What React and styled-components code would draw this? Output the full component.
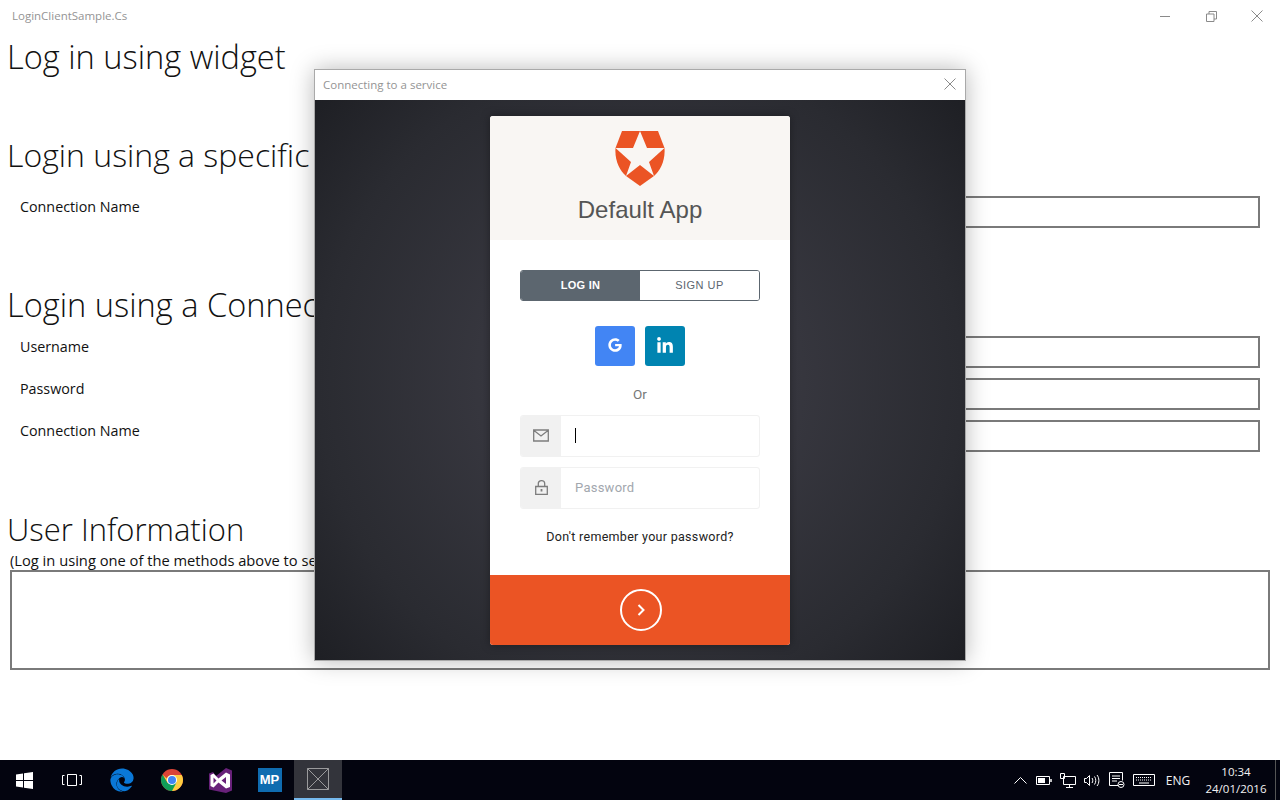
import React from "react";
import styled, { createGlobalStyle } from "styled-components";
import { FaGoogle, FaLinkedinIn, FaEdge } from "react-icons/fa";

const Global = createGlobalStyle`
  html, body { margin: 0; padding: 0; background: #fff; }
  * { box-sizing: border-box; }
  #root { width: 1280px; height: 800px; overflow: hidden; }
`;
const Win = styled.div`
  position: relative; width: 1280px; height: 800px; display: flex; flex-direction: column;
  font-family: "Open Sans", "Noto Sans", sans-serif; color: #111; background: #fff;
`;
const TitleBar = styled.header`
  height: 32px; flex: none; display: flex; align-items: center; padding-left: 12px;
  font-size: 11.5px; color: #949494;
`;
const TitleText = styled.span`margin-top: -2px;`;
const WinControls = styled.div`
  margin-left: auto; display: flex; align-items: center; height: 32px;
`;
const WinBtn = styled.div`
  width: 46px; height: 32px; display: flex; align-items: center; justify-content: center;
`;
const Main = styled.main`flex: 1; min-height: 0;`;
const Heading = styled.h2`
  margin: ${p => p.$top}px 0 0 7px; font-size: ${p => p.$size}px; font-weight: 300; line-height: 44px; color: #111; white-space: nowrap;
`;
const Rows = styled.div`
  margin-top: ${p => p.$top}px; padding: 0 20px; display: flex; flex-direction: column; gap: 10px;
`;
const Row = styled.div`display: grid; grid-template-columns: 300px 1fr; align-items: start;`;
const Label = styled.label`font-size: 14.3px; line-height: 22px;`;
const Field = styled.div`height: 32px; border: 2px solid #7a7a7a; background: #fff;`;
const Note = styled.p`margin: 0 0 0 10px; font-size: 14.7px; line-height: 19px; white-space: nowrap;`;
const OutBox = styled.div`margin: 0 10px; height: 100px; border: 2px solid #7a7a7a;`;

const Taskbar = styled.footer`
  height: 40px; flex: none; background: #03040f; display: flex; align-items: stretch;
`;
const TaskItem = styled.div`
  width: ${p => p.$w}px; display: flex; align-items: center; justify-content: center;
  background: ${p => (p.$active ? "#33343b" : "transparent")};
  border-bottom: ${p => (p.$active ? "2px solid #76b9ed" : "none")};
`;
const Tray = styled.div`margin-left: auto; display: flex; align-items: center; color: #fff; padding-right: 4px;`;
const TraySlot = styled.div`
  width: ${p => p.$w}px; height: 40px; display: flex; align-items: center; justify-content: center;
  font-size: 12px; color: #f2f2f2;
`;
const Clock = styled.div`
  width: 72px; margin-left: 2px; font-size: 11.5px; line-height: 17px; text-align: center; color: #f2f2f2;
`;
const ShowDesktop = styled.div`width: 1px; height: 40px; background: #555; margin-left: 3px;`;
const MpTile = styled.div`
  width: 24px; height: 24px; background: #0f6cb0; color: #fff; font: bold 13px/24px "Liberation Sans", sans-serif;
  text-align: center;
`;

const Modal = styled.section`
  position: absolute; left: 314px; top: 69px; width: 652px; height: 592px;
  border: 1px solid #a9a9a9; background: #fff; box-shadow: 0 0 22px rgba(0,0,0,.28);
  display: flex; flex-direction: column;
`;
const ModalBar = styled.div`
  height: 30px; flex: none; display: flex; align-items: center; justify-content: space-between;
  padding: 0 9px 2px 8px; font-size: 11.5px; color: #949494;
`;
const Stage = styled.div`
  flex: 1; display: flex; justify-content: center; align-items: flex-start; padding-top: 16px;
  background: radial-gradient(circle at 50% 50%, #40404b 0%, #37373f 35%, #2a2b31 75%, #1e1f24 100%);
`;
const Card = styled.div`
  width: 300px; height: 529px; background: #fff; border-radius: 3px; overflow: hidden;
  display: flex; flex-direction: column; box-shadow: 0 0 10px rgba(0,0,0,.35);
  font-family: Roboto, "Liberation Sans", sans-serif;
`;
const CardHead = styled.div`
  height: 124px; flex: none; background: #f9f6f3; display: flex; flex-direction: column; align-items: center; padding-top: 15px;
`;
const AppName = styled.h1`
  margin: 7px 0 0; font: 400 24px/34px "Liberation Sans", Arial, sans-serif; letter-spacing: .05px; color: #555;
`;
const CardBody = styled.div`flex: 1; padding: 30px 30px 0; display: flex; flex-direction: column;`;
const Tabs = styled.div`
  height: 31px; display: flex; border: 1px solid #5c666f; border-radius: 3px; overflow: hidden; flex: none;
`;
const Tab = styled.div`
  flex: 1; display: flex; align-items: center; justify-content: center; padding-bottom: 2px;
  font: ${p => (p.$on ? 700 : 400)} 11px "Liberation Sans", Arial, sans-serif; letter-spacing: ${p => (p.$on ? ".3px" : ".5px")};
  background: ${p => (p.$on ? "#5c666f" : "#fff")}; color: ${p => (p.$on ? "#fff" : "#5c666f")};
`;
const Socials = styled.div`margin-top: 25px; display: flex; justify-content: center; gap: 10px;`;
const Social = styled.div`
  width: 40px; height: 40px; border-radius: 3px; background: ${p => p.$bg}; color: #fff;
  display: flex; align-items: center; justify-content: center; padding-bottom: ${p => p.$lift || 0}px;
`;
const Or = styled.div`margin-top: 19px; height: 18px; font-size: 13.5px; line-height: 18px; color: #777; text-align: center;`;
const InputRow = styled.div`
  margin-top: ${p => p.$top}px; height: 42px; display: flex; border: 1px solid #f1f1f1; border-radius: 3px; overflow: hidden; flex: none;
`;
const InputIcon = styled.div`
  width: 40px; background: #f1f1f1; display: flex; align-items: center; justify-content: center; padding-bottom: 2px;
`;
const InputText = styled.div`
  flex: 1; padding: 0 0 2px 14px; display: flex; align-items: center; font-size: 13px; color: #a2a7ae; letter-spacing: .25px;
`;
const Caret = styled.div`width: 1px; height: 15px; background: #000;`;
const Forgot = styled.div`margin-top: 19px; font-size: 12.5px; line-height: 18px; letter-spacing: .3px; text-align: center; color: #222;`;
const Submit = styled.div`
  height: 70px; flex: none; background: #eb5424; display: flex; align-items: center; justify-content: center;
`;
const Ring = styled.div`
  width: 42px; height: 42px; margin-left: 1px; border: 2px solid #fff; border-radius: 50%;
  display: flex; align-items: center; justify-content: center;
`;

const Close = () => (
  <svg width="12" height="12" viewBox="0 0 12 12" stroke="#8a8a8a" strokeWidth="1"><path d="M.5.5l11 11M11.500.5l-11 11" /></svg>
);
const Shield = () => (
  <svg width="50" height="55" viewBox="0 0 50 55">
    <path fill="#eb5424" d="M7 0H43L49.500 17C50.500 30 45 40 39 45L25 55L11 45C5 40-.5 30 .5 17Z" />
    <path fill="#f9f6f3" d="M25 0L32 17H49.500L34 31L39 45L25 34L11 45L16 31L.5 17H18Z" />
  </svg>
);
const WinLogo = () => (
  <svg width="17" height="17" viewBox="0 0 17 17" fill="#fff">
    <path d="M0 2.500L7 1.500V8H0ZM8 1.300L17 0V8H8ZM0 9H7V15.500L0 14.500ZM8 9H17V17L8 15.700Z" />
  </svg>
);
const TaskView = () => (
  <svg width="20" height="14" viewBox="0 0 20 14" fill="none" stroke="#fff"><path d="M5.500 1.500h9v11h-9zM2.500 2.500H.5v9h2M17.500 2.500h2v9h-2" /></svg>
);
const Chrome = () => (
  <svg width="22" height="22" viewBox="0 0 22 22">
    <circle cx="11" cy="11" r="11" fill="#db4437" />
    <path d="M1.500 5.500L6.500 14 11 22C17 22 22 17 22 11c0-1.800-.4-3.500-1.300-5H11C8 6 6 8 5.800 9.500Z" fill="#ffcd40" />
    <path d="M1.500 5.500C0 8 0 11 0 11c0 6 5 11 11 11l4.500-8.500-9 .5Z" fill="#0f9d58" />
    <circle cx="11" cy="11" r="5" fill="#fff" /><circle cx="11" cy="11" r="4" fill="#4285f4" />
  </svg>
);
const VS = () => (
  <svg width="23" height="25" viewBox="0 0 23 25">
    <path fill="#68217a" d="M17 0L23 2.500V22.500L17 25L0 21.500V5.500L4 4 7 8Z" />
    <path fill="#fff" d="M1.500 7L4.500 5.500 9.500 10.500 17 4.500 21 6.500V19L17 20.500 9.500 14.500 4.500 19.500 1.500 18ZM4.500 9.500V15.500L7.500 12.500ZM17 9L12.500 12.500 17 16Z" fillRule="evenodd" />
  </svg>
);
const AppTile = () => (
  <svg width="22" height="22" viewBox="0 0 22 22" fill="none" stroke="#9a9a9c"><path d="M.5.5h21v21H.5zM.5.5l21 21M21.500.5l-21 21" /></svg>
);
const Mail = () => (
  <svg width="16" height="13" viewBox="0 0 16 13" fill="none" stroke="#7d7d7d" strokeWidth="1.300"><path d="M.7 1h14.600v11H.7zM1 1.500l7 5.500 7-5.500" /></svg>
);
const Lock = () => (
  <svg width="13" height="15" viewBox="0 0 13 15" fill="none" stroke="#7d7d7d" strokeWidth="1.300">
    <path d="M.7 6.500h11.600v7.800H.7zM3.300 6.500V3.800C3.300 2 4.700.7 6.500.7S9.700 2 9.700 3.800v2.700" />
    <path d="M6.500 9v2.500" strokeWidth="1.800" />
  </svg>
);

export default function App() {
  return (
    <Win>
      <Global />
      <TitleBar>
        <TitleText>LoginClientSample.Cs</TitleText>
        <WinControls>
          <WinBtn><svg width="10" height="1"><path d="M0 .5h10" stroke="#8a8a8a" /></svg></WinBtn>
          <WinBtn><svg width="11" height="11" viewBox="0 0 11 11" fill="none" stroke="#8a8a8a"><path d="M.5 3h7.500v7.500H.5zM3 3V.5h7.500V8H8" /></svg></WinBtn>
          <WinBtn><Close /></WinBtn>
        </WinControls>
      </TitleBar>
      <Main>
        <Heading $top={3} $size={32.6}>Log in using widget</Heading>
        <Heading $top={54} $size={32}>Login using a specific connection</Heading>
        <Rows $top={19}>
          <Row><Label>Connection Name</Label><Field /></Row>
        </Rows>
        <Heading $top={55} $size={32.6}>Login using a Connection</Heading>
        <Rows $top={9}>
          <Row><Label>Username</Label><Field /></Row>
          <Row><Label>Password</Label><Field /></Row>
          <Row><Label>Connection Name</Label><Field /></Row>
        </Rows>
        <Heading $top={55} $size={31}>User Information</Heading>
        <Note>(Log in using one of the methods above to see your details)</Note>
        <OutBox />
      </Main>
      <Taskbar>
        <TaskItem $w={48}><WinLogo /></TaskItem>
        <TaskItem $w={48}><TaskView /></TaskItem>
        <TaskItem $w={51}><FaEdge size={24} color="#0a78d7" /></TaskItem>
        <TaskItem $w={49}><Chrome /></TaskItem>
        <TaskItem $w={49}><VS /></TaskItem>
        <TaskItem $w={49}><MpTile>MP</MpTile></TaskItem>
        <TaskItem $w={48} $active><AppTile /></TaskItem>
        <Tray>
          <TraySlot $w={24}><svg width="13" height="8" viewBox="0 0 13 8" fill="none" stroke="#fff"><path d="M.5 7.500l6-6 6 6" /></svg></TraySlot>
          <TraySlot $w={24}><svg width="16" height="9" viewBox="0 0 16 9" fill="none" stroke="#fff"><path d="M.5.5h13v8H.5z" /><path d="M2 2h7v5H2z" fill="#fff" stroke="none" /><path d="M15 3v3" strokeWidth="1.500" /></svg></TraySlot>
          <TraySlot $w={24}><svg width="16" height="15" viewBox="0 0 16 15" fill="none" stroke="#fff"><path d="M3.500 3.500h12v8h-12zM9.500 11.500v3M6 14.500h7M.5.500h4v5h-4z" /></svg></TraySlot>
          <TraySlot $w={24}><svg width="16" height="13" viewBox="0 0 16 13" fill="none" stroke="#fff"><path d="M.5 4.500h2l3-3v10l-3-3h-2zM8 4c1 1 1 4 0 5M10.500 2.500c1.700 2 1.700 6 0 8M13 1c2.500 3 2.500 8 0 11" /></svg></TraySlot>
          <TraySlot $w={26}><svg width="16" height="16" viewBox="0 0 16 16" fill="none" stroke="#fff"><path d="M9 13.500H.5V.5h13v8M3 4h8M3 6.500h8M3 9h5" /><circle cx="12" cy="12.500" r="3" /><path d="M10 12.500h4" /></svg></TraySlot>
          <TraySlot $w={28}><svg width="22" height="12" viewBox="0 0 22 12" fill="none" stroke="#fff"><path d="M.5.5h21v11H.5z" /><path d="M3 3.500h16M3 6h16" strokeDasharray="1 1" /><path d="M6 9h10" /></svg></TraySlot>
          <TraySlot $w={40}>ENG</TraySlot>
          <Clock>10:34<br />24/01/2016</Clock>
          <ShowDesktop />
        </Tray>
      </Taskbar>
      <Modal>
        <ModalBar>Connecting to a service<Close /></ModalBar>
        <Stage>
          <Card>
            <CardHead>
              <Shield />
              <AppName>Default App</AppName>
            </CardHead>
            <CardBody>
              <Tabs><Tab $on>LOG IN</Tab><Tab>SIGN UP</Tab></Tabs>
              <Socials>
                <Social $bg="#4285f4" $lift={2}><FaGoogle size={14} /></Social>
                <Social $bg="#0084b1"><FaLinkedinIn size={18} /></Social>
              </Socials>
              <Or>Or</Or>
              <InputRow $top={12}><InputIcon><Mail /></InputIcon><InputText><Caret /></InputText></InputRow>
              <InputRow $top={10}><InputIcon><Lock /></InputIcon><InputText>Password</InputText></InputRow>
              <Forgot>Don't remember your password?</Forgot>
            </CardBody>
            <Submit>
              <Ring><svg width="8" height="12" viewBox="0 0 8 12" fill="none" stroke="#fff" strokeWidth="2"><path d="M1.500 1L6.500 6l-5 5" /></svg></Ring>
            </Submit>
          </Card>
        </Stage>
      </Modal>
    </Win>
  );
}
